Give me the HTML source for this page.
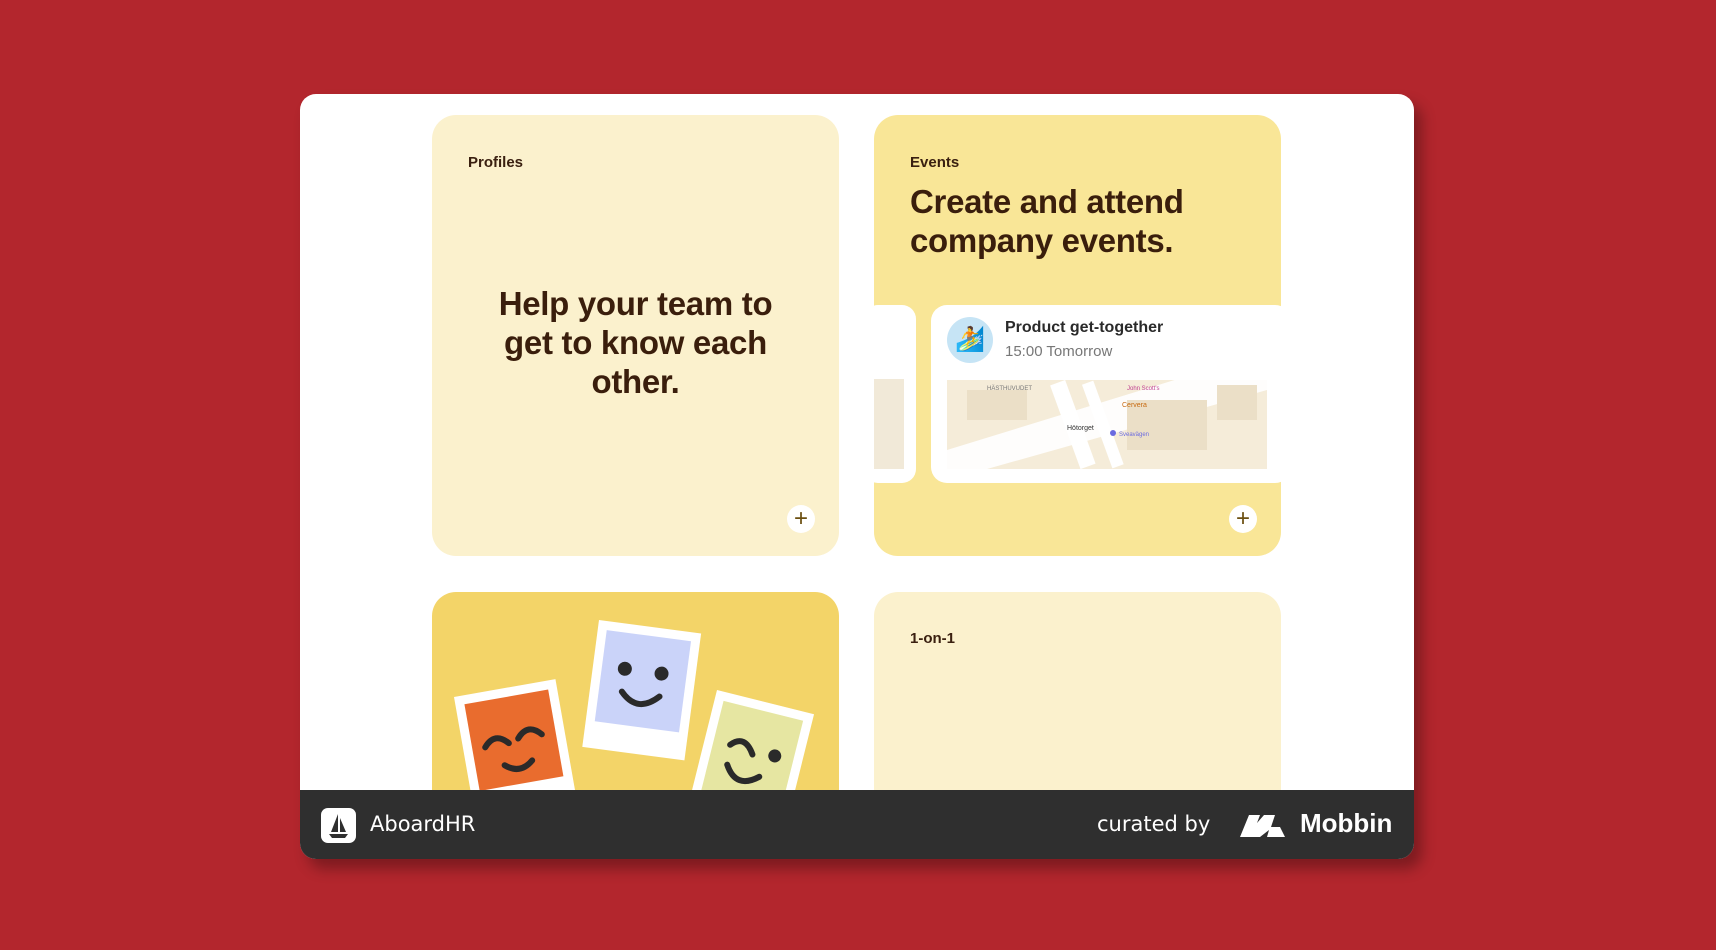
<!DOCTYPE html>
<html><head><meta charset="utf-8"><style>
*{margin:0;padding:0;box-sizing:border-box}
body{width:1716px;height:950px;background:#b3262d;font-family:"Liberation Sans",sans-serif;position:relative;overflow:hidden}
.frame{position:absolute;left:300px;top:94px;width:1114px;height:765px;background:#fff;border-radius:16px;overflow:hidden;box-shadow:8px 10px 14px rgba(0,0,0,.3)}
.card{position:absolute;width:407px;border-radius:24px;overflow:hidden}
.lbl{position:absolute;font-size:15px;font-weight:bold;color:#3a2010}
.h{position:absolute;font-size:33px;font-weight:bold;color:#3a1e0c;line-height:39px;letter-spacing:-0.3px}
.plus{position:absolute;width:28px;height:28px;border-radius:50%;background:#fff;color:#6b4f10;font-size:24px;line-height:27px;text-align:center}
.footer{position:absolute;left:0;top:696px;width:1114px;height:69px;background:#2f2f2f;color:#fff}
</style></head><body>
<div class="frame">
 <div class="card" style="left:132px;top:21px;height:441px;background:#fbf1cd">
  <div class="lbl" style="left:36px;top:39px">Profiles</div>
  <div class="h" style="left:0;width:407px;text-align:center;top:169px">Help your team to<br>get to know each<br>other.</div>
  <div class="plus" style="left:355px;top:390px">+</div>
 </div>
 <div class="card" style="left:574px;top:21px;height:441px;background:#f9e697">
  <div class="lbl" style="left:36px;top:39px">Events</div>
  <div class="h" style="left:36px;top:67px">Create and attend<br>company events.</div>
  <div style="position:absolute;left:-10px;top:190px;width:52px;height:178px;background:#fff;border-radius:14px;overflow:hidden">
   <div style="position:absolute;left:10px;top:74px;width:30px;height:90px;background:#f1e9d8"></div>
  </div>
  <div style="position:absolute;left:57px;top:190px;width:360px;height:178px;background:#fff;border-radius:16px;overflow:hidden">
   <div style="position:absolute;left:16px;top:12px;width:46px;height:46px;border-radius:50%;background:#c6e4f5;text-align:center;line-height:46px;font-size:24px">🏄</div>
   <div style="position:absolute;left:74px;top:14px;font-size:16px;font-weight:bold;color:#2a2a2a">Product get-together</div>
   <div style="position:absolute;left:74px;top:38px;font-size:15px;color:#777">15:00 Tomorrow</div>
   <svg style="position:absolute;left:16px;top:75px" width="320" height="89" viewBox="0 0 320 89">
    <rect width="320" height="89" fill="#f5ecd9"/>
    <polygon points="0,89 0,70 260,-10 320,-10 320,10 40,89" fill="#fff" opacity=".9"/>
    <rect x="118" y="0" width="16" height="89" fill="#fff" transform="rotate(-20 126 45)"/>
    <rect x="150" y="0" width="12" height="89" fill="#fff" transform="rotate(-20 156 45)"/>
    <rect x="20" y="10" width="60" height="30" fill="#ebdfc7"/>
    <rect x="180" y="20" width="80" height="50" fill="#ebdfc7"/>
    <rect x="270" y="5" width="40" height="35" fill="#ebdfc7"/>
    <text x="120" y="50" font-size="7" fill="#333" font-family="Liberation Sans">Hötorget</text>
    <text x="175" y="27" font-size="7" fill="#c76a10" font-family="Liberation Sans">Cervera</text>
    <text x="40" y="10" font-size="6" fill="#777" font-family="Liberation Sans">HÄSTHUVUDET</text>
    <text x="180" y="10" font-size="6" fill="#c04090" font-family="Liberation Sans">John Scott's</text>
    <circle cx="166" cy="53" r="3" fill="#6a6ae0"/>
    <text x="172" y="56" font-size="6" fill="#6a6ae0" font-family="Liberation Sans">Sveavägen</text>
   </svg>
  </div>
  <div class="plus" style="left:355px;top:390px">+</div>
 </div>
 <div class="card" style="left:132px;top:498px;height:240px;background:#f3d468">
  <svg width="407" height="200" viewBox="0 0 407 200">
   <g transform="translate(22,105) rotate(-10)">
    <rect width="103" height="128" fill="#fff"/><rect x="9" y="9" width="85" height="88" fill="#e96c2e"/>
    <path d="M22 55 q12-14 24 0 M56 52 q12-14 24 0 M38 76 q14 12 28 0" stroke="#2a2a2a" stroke-width="6" fill="none" stroke-linecap="round"/>
   </g>
   <g transform="translate(167,28) rotate(7.5)">
    <rect width="103" height="128" fill="#fff"/><rect x="9" y="9" width="85" height="92" fill="#cad3f9"/>
    <circle cx="32" cy="45" r="7" fill="#2a2a2a"/><circle cx="69" cy="45" r="7" fill="#2a2a2a"/>
    <path d="M32 68 q18 20 38 0" stroke="#2a2a2a" stroke-width="6" fill="none" stroke-linecap="round"/>
   </g>
   <g transform="translate(285,98) rotate(14)">
    <rect width="100" height="128" fill="#fff"/><rect x="9" y="9" width="82" height="95" fill="#e6e6a2"/>
    <path d="M26 50 q12-14 24 4 M28 70 q14 22 34 4" stroke="#2a2a2a" stroke-width="6" fill="none" stroke-linecap="round"/>
    <circle cx="72" cy="50" r="6.5" fill="#2a2a2a"/>
   </g>
  </svg>
 </div>
 <div class="card" style="left:574px;top:498px;height:240px;background:#fbf1cd">
  <div class="lbl" style="left:36px;top:38px">1-on-1</div>
 </div>
 <div class="footer">
  <svg style="position:absolute;left:21px;top:18px" width="35" height="35" viewBox="0 0 35 35"><rect width="35" height="35" rx="7" fill="#fff"/><path d="M17 6 L17 24 L10 24 Z M19 10 L19 24 L25 24 Z" fill="#2f2f2f"/><path d="M8 26 L27 26 L24 30 L11 30 Z" fill="#2f2f2f"/></svg>
  <div style="position:absolute;left:70px;top:22px;font-size:21px;font-family:'DejaVu Sans',sans-serif">AboardHR</div>
  <div style="position:absolute;left:797px;top:22px;font-size:21px;font-family:'DejaVu Sans',sans-serif">curated by</div>
  <svg style="position:absolute;left:940px;top:23px" width="58" height="24" viewBox="0 0 58 24"><path d="M0 24 L9 2 L20 2 L17 10 L24 2 L35 2 L31 14 L40 14 L45 24 L27 24 L29 17 L20 24 Z" fill="#fff"/></svg>
  <div style="position:absolute;left:1000px;top:18px;font-size:26px;font-weight:bold">Mobbin</div>
 </div>
</div>
</body></html>
